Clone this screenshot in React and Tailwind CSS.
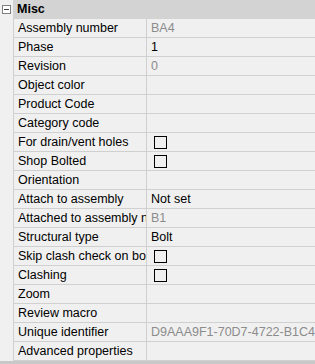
import React from "react";

const rows = [
  { label: "Assembly number", value: "BA4", muted: true },
  { label: "Phase", value: "1" },
  { label: "Revision", value: "0", muted: true },
  { label: "Object color" },
  { label: "Product Code" },
  { label: "Category code" },
  { label: "For drain/vent holes", check: true },
  { label: "Shop Bolted", check: true },
  { label: "Orientation" },
  { label: "Attach to assembly", value: "Not set" },
  { label: "Attached to assembly number", value: "B1", muted: true },
  { label: "Structural type", value: "Bolt" },
  { label: "Skip clash check on bolts", check: true },
  { label: "Clashing", check: true },
  { label: "Zoom" },
  { label: "Review macro" },
  { label: "Unique identifier", value: "D9AAA9F1-70D7-4722-B1C4-0A5F3E2B9C11", muted: true },
  { label: "Advanced properties" },
];

const Row = ({ label, value, muted, check }) => (
  <div className="flex h-[19px]">
    <div className="w-[13px] shrink-0" />
    <div className="w-[134px] shrink-0 border-l border-r border-b border-[#d0d0d0] pl-[4px] overflow-hidden whitespace-nowrap leading-[18px]">
      {label}
    </div>
    <div className="flex-1 min-w-0 border-b border-[#d0d0d0] pl-[4px] overflow-hidden whitespace-nowrap leading-[18px] flex items-center">
      {check ? (
        <div className="w-[13px] h-[13px] border border-black ml-[3px]" />
      ) : (
        <span className={muted ? "text-[#8c8c8c]" : "text-black"}>{value}</span>
      )}
    </div>
  </div>
);

export default function App() {
  return (
    <div
      className="w-[315px] h-[364px] bg-[#f0f0f0] text-[12.5px] text-black overflow-hidden flex flex-col"
      style={{ fontFamily: '"Liberation Sans", Arial, sans-serif' }}
    >
      <div className="flex h-[19px] shrink-0">
        <div className="w-[13px] shrink-0 flex items-center justify-center">
          <div className="w-[9px] h-[9px] border border-[#808080] bg-white flex items-center justify-center">
            <div className="w-[5px] h-px bg-[#404040]" />
          </div>
        </div>
        <div className="flex-1 bg-[#d3d3d3] pl-[4px] font-bold leading-[19px]">Misc</div>
      </div>
      {rows.map((r) => (
        <Row key={r.label} {...r} />
      ))}
      <div className="flex-1 bg-[#c8c8c8]" />
    </div>
  );
}
